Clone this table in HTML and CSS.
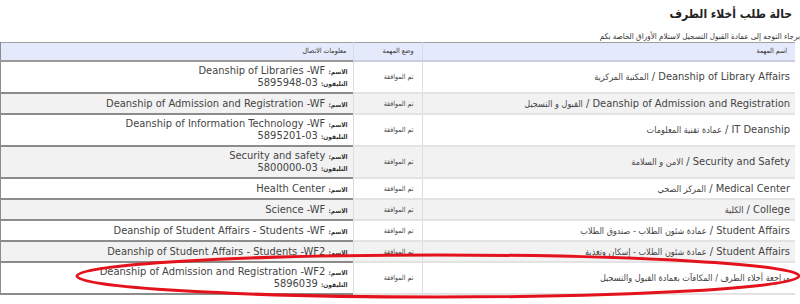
FILE: index.html
```html
<!DOCTYPE html>
<html lang="ar" dir="rtl">
<head>
<meta charset="utf-8">
<title>حالة طلب أخلاء الطرف</title>
<link rel="stylesheet" href="styles.css">
</head>
<body>
<div class="page">
  <h1 class="title">حالة طلب أخلاء الطرف</h1>
  <p class="note">برجاء التوجه إلى عمادة القبول التسجيل لاستلام الأوراق الخاصة بكم</p>
  <table class="grid">
    <colgroup>
      <col class="c-task">
      <col class="c-status">
      <col class="c-contact">
    </colgroup>
    <thead>
      <tr>
        <th>اسم المهمة</th>
        <th>وضع المهمة</th>
        <th class="contact">معلومات الاتصال</th>
      </tr>
    </thead>
    <tbody>
      <tr class="two">
        <td class="task">Deanship of Library Affairs / <span class="ar">المكتبة المركزية</span></td>
        <td class="status">تم الموافقة</td>
        <td class="contact"><b class="lbl">الاسم:</b> Deanship of Libraries -WF<br><b class="lbl">التليفون:</b> 03-5895948</td>
      </tr>
      <tr class="alt">
        <td class="task">Deanship of Admission and Registration / <span class="ar">القبول و التسجيل</span></td>
        <td class="status">تم الموافقة</td>
        <td class="contact"><b class="lbl">الاسم:</b> Deanship of Admission and Registration -WF</td>
      </tr>
      <tr class="two">
        <td class="task">IT Deanship / <span class="ar">عمادة تقنية المعلومات</span></td>
        <td class="status">تم الموافقة</td>
        <td class="contact"><b class="lbl">الاسم:</b> Deanship of Information Technology -WF<br><b class="lbl">التليفون:</b> 03-5895201</td>
      </tr>
      <tr class="alt two">
        <td class="task">Security and Safety / <span class="ar">الامن و السلامة</span></td>
        <td class="status">تم الموافقة</td>
        <td class="contact"><b class="lbl">الاسم:</b> Security and safety<br><b class="lbl">التليفون:</b> 03-5800000</td>
      </tr>
      <tr>
        <td class="task">Medical Center / <span class="ar">المركز الصحي</span></td>
        <td class="status">تم الموافقة</td>
        <td class="contact"><b class="lbl">الاسم:</b> Health Center</td>
      </tr>
      <tr class="alt">
        <td class="task">College / <span class="ar">الكلية</span></td>
        <td class="status">تم الموافقة</td>
        <td class="contact"><b class="lbl">الاسم:</b> Science -WF</td>
      </tr>
      <tr>
        <td class="task">Student Affairs / <span class="ar">عمادة شئون الطلاب - صندوق الطلاب</span></td>
        <td class="status">تم الموافقة</td>
        <td class="contact"><b class="lbl">الاسم:</b> Deanship of Student Affairs - Students -WF</td>
      </tr>
      <tr class="alt">
        <td class="task">Student Affairs / <span class="ar">عمادة شئون الطلاب - إسكان وتغذية</span></td>
        <td class="status">تم الموافقة</td>
        <td class="contact"><b class="lbl">الاسم:</b> Deanship of Student Affairs - Students -WF2</td>
      </tr>
      <tr class="two">
        <td class="task"><span class="ar">مراجعة أخلاء الطرف / المكافآت بعمادة القبول والتسجيل</span></td>
        <td class="status">تم الموافقة</td>
        <td class="contact"><b class="lbl">الاسم:</b> Deanship of Admission and Registration -WF2<br><b class="lbl">التليفون:</b> 5896039</td>
      </tr>
    </tbody>
  </table>
  <svg class="mark" width="800" height="304" viewBox="0 0 800 304" aria-hidden="true">
    <ellipse cx="438" cy="276" rx="361" ry="21" fill="none" stroke="#e3121c" stroke-width="3"/>
  </svg>
</div>
</body>
</html>
```
FILE: styles.css
```css
html, body {
  margin: 0;
  padding: 0;
  background: #ffffff;
}
body {
  font-family: "DejaVu Sans Condensed", "DejaVu Sans", Tahoma, sans-serif;
  font-stretch: condensed;
  font-size: 11px;
  color: #444444;
}
.page {
  position: relative;
  width: 800px;
  height: 304px;
  overflow: hidden;
}
.title {
  margin: 0;
  padding: 6px 8px 0 0;
  font-size: 12px;
  line-height: 16px;
  font-weight: bold;
  color: #222222;
}
.note {
  margin: 0;
  padding: 10px 0 0 0;
  height: 10px;
  font-size: 8px;
  line-height: 10px;
  color: #333333;
}
.grid {
  width: 795px;
  margin: 0 5px 0 0;
  border-collapse: collapse;
  table-layout: fixed;
}
.c-task { width: 373px; }
.c-status { width: 69px; }
.c-contact { width: 353px; }
.grid th {
  background: #e4e9fb;
  border-top: 1px solid #a0a0a0;
  border-bottom: 2px solid #c9cedd;
  border-left: 1px solid #d8dbe4;
  font-weight: normal;
  font-size: 7px;
  line-height: 11px;
  padding: 3px 8px 3px 5px;
  text-align: right;
  color: #333333;
}
.grid th.contact {
  border-left: 2px solid #8c8c8c;
  border-bottom: 2px solid #9a9a9a;
  padding-right: 6px;
}
.grid td {
  border-bottom: 2px solid #e3e3e3;
  border-left: 1px solid #dddddd;
  padding: 4px 5px 3px;
  line-height: 12px;
  vertical-align: middle;
  text-align: right;
}
.grid tr.two td {
  padding-top: 3px;
  padding-bottom: 3px;
}
.grid tr.alt td {
  background: #f2f2f2;
}
.grid td.task {
  color: #444444;
}
.grid td.status {
  font-size: 7px;
  padding-right: 8px;
  color: #444444;
}
.grid td.contact {
  border-left: 2px solid #8c8c8c;
  border-bottom: 2px solid #8c8c8c;
  padding-right: 5px;
}
.ar {
  font-size: 9px;
  line-height: 1;
}
.lbl {
  font-size: 6.5px;
  line-height: 1;
  font-weight: bold;
  color: #333333;
}
.mark {
  position: absolute;
  left: 0;
  top: 0;
  pointer-events: none;
}
```
